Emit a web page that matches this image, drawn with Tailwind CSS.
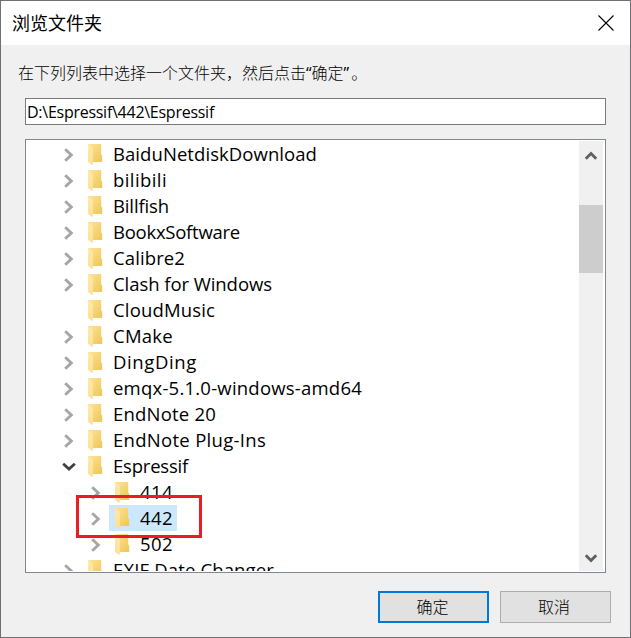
<!DOCTYPE html>
<html lang="zh-CN">
<head>
<meta charset="utf-8">
<title>浏览文件夹</title>
<script src="https://cdn.jsdelivr.net/npm/@tailwindcss/browser@4"></script>
</head>
<body class="w-[631px] h-[638px] overflow-hidden bg-[#f0f0f0]">
<svg class="absolute size-0">
  <defs>
    <linearGradient id="back" x1="0" y1="0" x2="1" y2="1"><stop offset="0" stop-color="#ffe498"/><stop offset="1" stop-color="#edc657"/></linearGradient>
    <linearGradient id="flap" x1="0" y1="0" x2="0" y2="1"><stop offset="0" stop-color="#ffe9a8"/><stop offset="1" stop-color="#fde096"/></linearGradient>
    <symbol id="folder" viewBox="0 0 15 22">
      <path d="M0 1H13.2V11.5L14.2 12.5V19H0Z" fill="url(#back)"/>
      <path d="M0 1L4.3 4.3Q5 5 5 6V21L4 22L0 18.8Z" fill="url(#flap)"/>
    </symbol>
    <symbol id="right" viewBox="0 0 10 14"><path d="M1.2 1.3L7.3 7L1.2 12.7" fill="none" stroke="#a6a6a6" stroke-width="2.9"/></symbol>
    <symbol id="down" viewBox="0 0 14 10"><path d="M1.2 1.7L7 7L12.8 1.7" fill="none" stroke="#404040" stroke-width="2.8"/></symbol>
  </defs>
</svg>
<div class="relative flex flex-col w-[631px] h-[638px] border border-[#707072] bg-[#f0f0f0] text-black font-['Open_Sans','Noto_Sans_CJK_SC',sans-serif]">
  <header class="flex h-11 shrink-0 items-center justify-between bg-white pl-[11px] pr-4">
    <h1 class="mb-[2px] text-[18px] leading-6 font-['Noto_Sans_CJK_SC',sans-serif] font-normal">浏览文件夹</h1>
    <svg class="size-4" viewBox="0 0 16 16"><path d="M.5 .5L15.5 15.5M15.5 .5L.5 15.5" stroke="#000" stroke-width="1.1"/></svg>
  </header>
  <p class="mt-[15px] ml-[17px] h-6 text-[16px] leading-6 whitespace-nowrap font-['Noto_Sans_CJK_SC',sans-serif] font-light"><span>在下列列表中选择一个文件夹，然后点击</span><span class="font-['Open_Sans'] font-normal">“</span><span>确定</span><span class="mr-[2px] font-['Open_Sans'] font-normal">”</span><span>。</span></p>
  <div class="mt-[14px] ml-6 flex h-[27px] w-[581px] shrink-0 items-center border border-[#7a7a7a] bg-white pl-px text-[16px] leading-6"><span data-w="187">D:\Espressif\442\Espressif</span></div>
  <div class="mt-[14px] ml-6 flex h-[434px] w-[581px] shrink-0 border border-[#828790] bg-white py-px pr-[2px]">
    <ul id="tree" class="h-[430px] flex-1 overflow-hidden text-[18.5px]"></ul>
    <div class="flex w-6 flex-col items-center bg-[#f0f0f0]">
      <svg class="mt-[10px] h-[10px] w-3 shrink-0" viewBox="0 0 12 10"><path d="M.8 7.8L6 2.6L11.2 7.8" fill="none" stroke="#606060" stroke-width="2.8"/></svg>
      <div class="mt-11 h-[68px] w-full shrink-0 bg-[#cdcdcd]"></div>
      <svg class="mt-auto mb-[8px] h-[10px] w-3 shrink-0" viewBox="0 0 12 10"><path d="M.8 2.2L6 7.4L11.2 2.2" fill="none" stroke="#606060" stroke-width="2.8"/></svg>
    </div>
  </div>
  <footer class="mt-[18px] flex justify-end gap-[11px] pr-[19px] text-[16px] font-['Noto_Sans_CJK_SC',sans-serif] font-light">
    <button class="flex h-8 w-[111px] items-center justify-center border-2 border-[#0078d7] bg-[#e1e1e1] pr-[2px] pb-[2px]">确定</button>
    <button class="flex h-8 w-[111px] items-center justify-center border border-[#adadad] bg-[#e1e1e1] pr-[3px] pb-[2px]">取消</button>
  </footer>
  <div class="absolute left-[75px] top-[494px] h-[43px] w-[126px] border-[3px] border-[#ed1c24]"></div>
</div>
<script>
// [label, label width, depth, state]
const rows = [
  ['BaiduNetdiskDownload', 204, 0, 'closed'], ['bilibili', 54, 0, 'closed'], ['Billfish', 56, 0, 'closed'],
  ['BookxSoftware', 127, 0, 'closed'], ['Calibre2', 72, 0, 'closed'], ['Clash for Windows', 159, 0, 'closed'],
  ['CloudMusic', 102, 0, 'leaf'], ['CMake', 60, 0, 'closed'], ['DingDing', 84, 0, 'closed'],
  ['emqx-5.1.0-windows-amd64', 249, 0, 'closed'], ['EndNote 20', 103, 0, 'closed'], ['EndNote Plug-Ins', 153, 0, 'closed'],
  ['Espressif', 75, 0, 'open'], ['414', 33, 1, 'closed'], ['442', 33, 1, 'selected'], ['502', 33, 1, 'closed'],
  ['EXIF Date Changer', 161, 0, 'closed'],
];
const arrows = {
  closed: '<svg class="h-[14px] w-[10px] ml-[2px] mt-[2px]"><use href="#right"/></svg>',
  open: '<svg class="h-[10px] w-[14px] mt-[2px]"><use href="#down"/></svg>',
  leaf: '',
};
arrows.selected = arrows.closed;
document.getElementById('tree').innerHTML = rows.map(([label, w, depth, state]) => `
  <li class="flex h-[26px] items-center ${depth ? 'pl-[63px]' : 'pl-9'}">
    <span class="flex w-5 shrink-0 items-center">${arrows[state]}</span>
    <span class="flex h-[26px] items-center pl-[6px] ${state === 'selected' ? 'bg-[#cce8ff] w-[68px]' : ''}">
      <svg class="h-[22px] w-[15px] shrink-0"><use href="#folder"/></svg>
      <span class="ml-[10px] leading-[26px] whitespace-nowrap" data-w="${w}">${label}</span>
    </span>
  </li>`).join('');
// Spread each label over its given width.
function fit() {
  document.querySelectorAll('[data-w]').forEach(el => {
    el.style.letterSpacing = '0px';
    const gap = (el.dataset.w - el.getBoundingClientRect().width) / el.textContent.length;
    el.style.letterSpacing = gap.toFixed(3) + 'px';
  });
}
fit();
window.addEventListener('load', fit);
document.fonts.ready.then(fit);
setTimeout(fit, 100);
</script>
</body>
</html>
